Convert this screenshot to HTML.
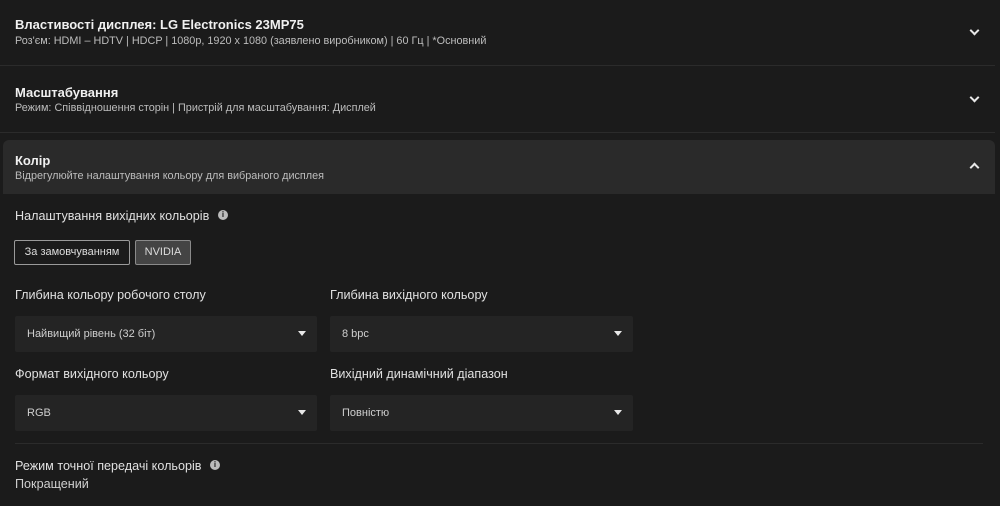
<!DOCTYPE html>
<html><head><meta charset="utf-8"><style>
*{margin:0;padding:0;box-sizing:border-box}
body{width:1000px;height:506px;background:#1b1b1b;font-family:"Liberation Sans",sans-serif;color:#e8e8e8;position:relative;overflow:hidden}
.a{position:absolute;white-space:nowrap}
.t{font-weight:bold;font-size:13px;color:#f0f0f0}
.s{font-size:10.85px;color:#bdbdbd}
.l{font-size:12.6px;color:#e0e0e0}
.sep{position:absolute;height:1px;background:#2b2b2b}
.dd{position:absolute;width:302px;height:36px;background:#242424;border-radius:2px;font-size:11px;color:#cfcfcf;padding:12px 0 0 12px}
.dd:after{content:"";position:absolute;right:11px;top:15px;border-left:4px solid transparent;border-right:4px solid transparent;border-top:5px solid #e8e8e8}
.chev{position:absolute;width:7px;height:7px;border-right:2px solid #e8e8e8;border-bottom:2px solid #e8e8e8}
.info{position:absolute;width:10px;height:10px;border-radius:50%;background:#bbb;color:#1b1b1b;font-size:8px;font-weight:bold;text-align:center;line-height:10px}
</style></head><body>
<div class="a t" style="left:15px;top:17px">Властивості дисплея: LG Electronics 23MP75</div>
<div class="a s" style="left:15px;top:35px">Роз'єм: HDMI – HDTV | HDCP | 1080p, 1920 x 1080 (заявлено виробником) | 60 Гц | *Основний</div>
<div class="chev" style="left:971px;top:27px;transform:rotate(45deg)"></div>
<div class="sep" style="left:0;top:65px;width:995px"></div>
<div class="a t" style="left:15px;top:85px">Масштабування</div>
<div class="a s" style="left:15px;top:102px">Режим: Співвідношення сторін | Пристрій для масштабування: Дисплей</div>
<div class="chev" style="left:971px;top:94px;transform:rotate(45deg)"></div>
<div class="sep" style="left:0;top:132px;width:995px"></div>
<div style="position:absolute;left:3px;top:140px;width:992px;height:54px;background:#2a2a2a;border-radius:6px 6px 0 0"></div>
<div class="a t" style="left:15px;top:153px">Колір</div>
<div class="a s" style="left:15px;top:170px">Відрегулюйте налаштування кольору для вибраного дисплея</div>
<div class="chev" style="left:971px;top:164px;transform:rotate(-135deg)"></div>
<div class="a l" style="left:15px;top:209px">Налаштування вихідних кольорів</div>
<div class="info" style="left:218px;top:210px">i</div>
<div class="a" style="left:14px;top:240px;width:116px;height:25px;border:1px solid #9a9a9a;border-radius:2px;font-size:11px;color:#ddd;text-align:center;line-height:23px">За замовчуванням</div>
<div class="a" style="left:135px;top:240px;width:56px;height:25px;border:1px solid #8a8a8a;background:#444;border-radius:2px;font-size:11px;color:#ddd;text-align:center;line-height:23px">NVIDIA</div>
<div class="a l" style="left:15px;top:288px">Глибина кольору робочого столу</div>
<div class="a l" style="left:330px;top:288px">Глибина вихідного кольору</div>
<div class="dd" style="left:15px;top:316px">Найвищий рівень (32 біт)</div>
<div class="dd" style="left:330px;top:316px;width:303px">8 bpc</div>
<div class="a l" style="left:15px;top:367px">Формат вихідного кольору</div>
<div class="a l" style="left:330px;top:367px">Вихідний динамічний діапазон</div>
<div class="dd" style="left:15px;top:395px">RGB</div>
<div class="dd" style="left:330px;top:395px;width:303px">Повністю</div>
<div class="sep" style="left:15px;top:443px;width:968px"></div>
<div class="a l" style="left:15px;top:459px">Режим точної передачі кольорів</div>
<div class="info" style="left:210px;top:460px">i</div>
<div class="a l" style="left:15px;top:477px;color:#cfcfcf">Покращений</div>
</body></html>
